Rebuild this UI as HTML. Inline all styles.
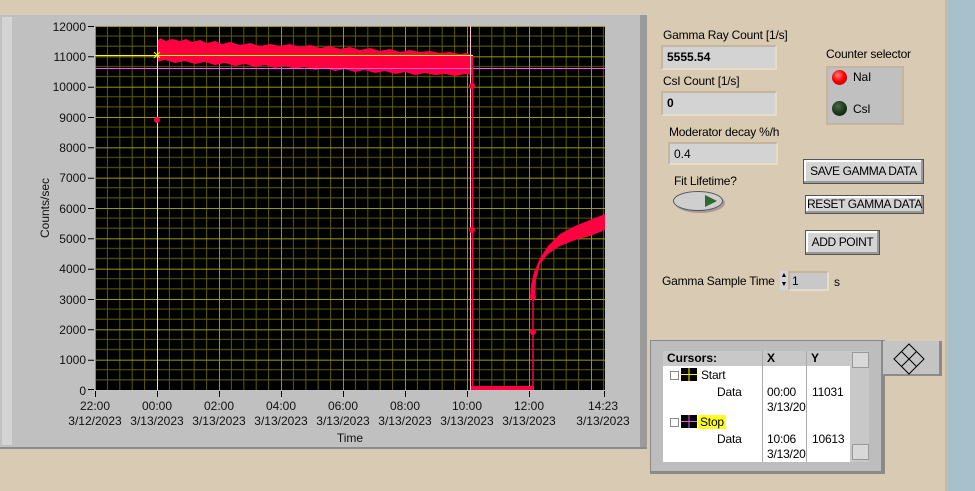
<!DOCTYPE html>
<html><head><style>
body{margin:0;width:975px;height:491px;overflow:hidden;background:#d9cab3;font-family:"Liberation Sans",sans-serif;position:relative}
.a{position:absolute;white-space:nowrap}
.t{font-size:12px;color:#000;letter-spacing:-0.2px}
.box{background:#d3d3d3;border:2px solid #c8b99f;border-color:#c4b59c #e8dcc8 #e8dcc8 #c4b59c;box-sizing:border-box;font-size:12px;padding:3px 4px}
.btn{background:#d4d4d4;border:1px solid #555;box-shadow:inset -2px -2px 0 #999,inset 2px 2px 0 #fff;font-size:12px;text-align:center;box-sizing:border-box;letter-spacing:-0.4px;white-space:nowrap}
</style></head><body>
<div class="a" style="left:948px;top:0;width:27px;height:491px;background:#a8bfcc"></div>
<div class="a" style="left:945px;top:0;width:3px;height:491px;background:#c9bba5"></div>
<div class="a" style="left:0;top:15px;width:647px;height:432px;background:#c0c0c0;border-bottom:2px solid #8a8a8a"></div>
<div class="a" style="left:2px;top:17px;width:10px;height:428px;background:#d4d4d4"></div>
<div class="a" style="left:640px;top:15px;width:7px;height:432px;background:#9a9a9a"></div>
<svg class="a" style="left:0;top:0" width="640" height="491" font-family="Liberation Sans" font-size="12">
<defs>
<pattern id="g" x="95" y="26" width="62" height="30.333" patternUnits="userSpaceOnUse">
<g stroke="#5a5a00" stroke-width="1">
<line x1="12.4" y1="0" x2="12.4" y2="31"/><line x1="24.8" y1="0" x2="24.8" y2="31"/><line x1="37.2" y1="0" x2="37.2" y2="31"/><line x1="49.6" y1="0" x2="49.6" y2="31"/>
<line x1="0" y1="10.1" x2="62" y2="10.1"/><line x1="0" y1="20.2" x2="62" y2="20.2"/>
</g>
<g stroke="#9a9a00"><line x1="0.5" y1="0" x2="0.5" y2="31"/><line x1="0" y1="0.5" x2="62" y2="0.5"/></g>
</pattern>
</defs>
<rect x="95" y="26" width="510" height="364" fill="#000"/>
<rect x="95" y="26" width="510" height="364" fill="url(#g)"/>
<polygon fill="#ff0040" points="157,42 160,38 166,41 172,39 180,41 186,39 192,42 200,40 207,43 215,41 222,44 230,42 240,45 250,43 260,46 270,44 280,46 290,44 300,47 310,45 320,48 330,46 340,49 350,47 360,50 370,48 380,51 390,49 400,52 410,50 420,52 430,51 440,53 450,52 460,54 465,53 473,55 473,75 465,74 455,76 445,74 435,75 425,73 415,75 405,72 395,74 385,71 375,73 365,70 355,72 345,69 335,71 325,68 315,70 305,67 295,69 285,66 275,68 265,65 255,67 245,64 235,66 225,63 215,65 205,62 195,64 185,61 175,63 165,60 157,62"/>
<line x1="95" y1="68.5" x2="605" y2="68.5" stroke="#ff50ff"/>
<line x1="95" y1="55.5" x2="473" y2="55.5" stroke="#ffff00"/>
<line x1="157.5" y1="26" x2="157.5" y2="390" stroke="#ffff00"/>
<line x1="470.5" y1="26" x2="470.5" y2="390" stroke="#ffc0d0"/>
<line x1="472.5" y1="60" x2="472.5" y2="389" stroke="#ff0040" stroke-width="1.5"/>
<rect x="471" y="386" width="63" height="4" fill="#ff0040"/>
<line x1="533" y1="389" x2="533" y2="298" stroke="#ff0040" stroke-width="1.5"/>
<path fill="#ff0040" d="M530,298 L531,285 534,272 540,258 548,246 560,234 575,226 590,220 605,214 L605,230 590,236 575,240 560,246 548,254 540,264 536,280 535,300 Z"/>
<circle cx="157" cy="120" r="3" fill="#ff0040"/>
<circle cx="472" cy="230" r="3" fill="#ff0040"/>
<circle cx="472" cy="86" r="3" fill="#ff0040"/>
<circle cx="533" cy="332" r="3" fill="#ff0040"/>
<circle cx="533" cy="297" r="3" fill="#ff0040"/>
<path d="M154,52 l6,6 m0,-6 l-6,6" stroke="#ffff00"/>
<g text-anchor="end" fill="#111">
<text x="86" y="31">12000</text><text x="86" y="61">11000</text><text x="86" y="91">10000</text><text x="86" y="122">9000</text><text x="86" y="152">8000</text><text x="86" y="182">7000</text><text x="86" y="213">6000</text><text x="86" y="243">5000</text><text x="86" y="273">4000</text><text x="86" y="304">3000</text><text x="86" y="334">2000</text><text x="86" y="364">1000</text><text x="86" y="395">0</text>
</g>
<g stroke="#000">
<path d="M88,26.5h6M88,56.8h6M88,87.2h6M88,117.5h6M88,147.8h6M88,178.2h6M88,208.5h6M88,238.8h6M88,269.2h6M88,299.5h6M88,329.8h6M88,360.2h6M88,389.5h6"/>
<path d="M95.5,391v6M157.5,391v6M219.5,391v6M281.5,391v6M343.5,391v6M405.5,391v6M467.5,391v6M529.5,391v6M604.5,391v6"/>
</g>
<g text-anchor="middle" fill="#111">
<text x="95" y="410">22:00</text><text x="95" y="425">3/12/2023</text>
<text x="157" y="410">00:00</text><text x="157" y="425">3/13/2023</text>
<text x="219" y="410">02:00</text><text x="219" y="425">3/13/2023</text>
<text x="281" y="410">04:00</text><text x="281" y="425">3/13/2023</text>
<text x="343" y="410">06:00</text><text x="343" y="425">3/13/2023</text>
<text x="405" y="410">08:00</text><text x="405" y="425">3/13/2023</text>
<text x="467" y="410">10:00</text><text x="467" y="425">3/13/2023</text>
<text x="529" y="410">12:00</text><text x="529" y="425">3/13/2023</text>
<text x="603" y="410">14:23</text><text x="603" y="425">3/13/2023</text>
<text x="350" y="442">Time</text>
<text transform="translate(49,208) rotate(-90)">Counts/sec</text>
</g>
</svg>
<div class="a t" style="left:663px;top:28px">Gamma Ray Count [1/s]</div>
<div class="a box" style="left:661px;top:45px;width:116px;height:25px;font-weight:bold">5555.54</div>
<div class="a t" style="left:663px;top:74px">CsI Count [1/s]</div>
<div class="a box" style="left:661px;top:91px;width:116px;height:25px;font-weight:bold">0</div>
<div class="a t" style="left:669px;top:125px">Moderator decay %/h</div>
<div class="a box" style="left:668px;top:142px;width:110px;height:23px">0.4</div>
<div class="a t" style="left:674px;top:174px">Fit Lifetime?</div>
<div class="a" style="left:673px;top:191px;width:48px;height:18px;border-radius:50%;background:#cfcfcf;border:1px solid #555;box-shadow:2px 2px 0 #a99"></div>
<div class="a" style="left:705px;top:195px;width:0;height:0;border-left:12px solid #2e6a2e;border-top:6px solid transparent;border-bottom:6px solid transparent"></div>
<div class="a t" style="left:826px;top:47px">Counter selector</div>
<div class="a" style="left:826px;top:66px;width:74px;height:55px;background:#c0c0c0;border:2px solid #c4b59c"></div>
<div class="a" style="left:832px;top:70px;width:15px;height:15px;border-radius:50%;background:radial-gradient(circle at 40% 35%,#ff8080,#f00 45%,#900);"></div>
<div class="a t" style="left:853px;top:70px">NaI</div>
<div class="a" style="left:832px;top:101px;width:15px;height:15px;border-radius:50%;background:radial-gradient(circle at 40% 35%,#4a6a4a,#1c3a1c 50%,#0a1a0a);"></div>
<div class="a t" style="left:853px;top:102px">CsI</div>
<div class="a btn" style="left:803px;top:159px;width:121px;height:25px;line-height:23px">SAVE GAMMA DATA</div>
<div class="a btn" style="left:805px;top:195px;width:119px;height:19px;line-height:17px">RESET GAMMA DATA</div>
<div class="a btn" style="left:805px;top:230px;width:75px;height:25px;line-height:23px">ADD POINT</div>
<div class="a t" style="left:662px;top:274px">Gamma Sample Time</div>
<div class="a" style="left:780px;top:271px;width:8px;height:19px;background:#d4d4d4;font-size:7px;line-height:9px;text-align:center">▲<br>▼</div>
<div class="a box" style="left:788px;top:271px;width:41px;height:20px;background:#c8c8c8;padding:1px 2px">1</div>
<div class="a t" style="left:834px;top:275px">s</div>
<div class="a" style="left:650px;top:340px;width:230px;height:130px;background:#bdbdbd;border:1px solid #888;border-right:4px solid #8a8a8a;border-bottom:3px solid #8a8a8a"></div>
<div class="a" style="left:663px;top:351px;width:206px;height:111px;background:#fff"></div>
<div class="a" style="left:663px;top:351px;width:99px;height:15px;background:#c8c8c8;font-weight:bold;font-size:12px;padding-left:4px;box-sizing:border-box;line-height:15px">Cursors:</div>
<div class="a" style="left:763px;top:351px;width:43px;height:15px;background:#c8c8c8;font-weight:bold;font-size:12px;padding-left:4px;box-sizing:border-box">X</div>
<div class="a" style="left:807px;top:351px;width:43px;height:15px;background:#c8c8c8;font-weight:bold;font-size:12px;padding-left:4px;box-sizing:border-box">Y</div>
<div class="a" style="left:762px;top:351px;width:1px;height:111px;background:#aaa"></div>
<div class="a" style="left:806px;top:351px;width:1px;height:111px;background:#aaa"></div>
<div class="a" style="left:850px;top:351px;width:19px;height:111px;background:#c8c8c8"></div>
<div class="a" style="left:852px;top:352px;width:15px;height:14px;background:#d8d8d8;border:1px solid #999"></div>
<div class="a" style="left:852px;top:444px;width:15px;height:14px;background:#d8d8d8;border:1px solid #999"></div>
<div class="a" style="left:670px;top:371px;width:7px;height:7px;border:1px solid #888;background:#fff"></div>
<div class="a" style="left:670px;top:418px;width:7px;height:7px;border:1px solid #888;background:#fff"></div>
<div class="a" style="left:681px;top:368px;width:16px;height:13px;background:#000"></div>
<div class="a" style="left:681px;top:415px;width:16px;height:13px;background:#000"></div>
<svg class="a" style="left:681px;top:368px" width="16" height="60"><g stroke-width="1"><path d="M8,0v13M0,6.5h16" stroke="#ffff00"/><path d="M8,47v13M0,53.5h16" stroke="#e060e0"/></g></svg>
<div class="a t" style="left:701px;top:368px">Start</div>
<div class="a t" style="left:698px;top:415px;background:#ffff20;padding:0 2px">Stop</div>
<div class="a t" style="left:717px;top:385px">Data</div>
<div class="a t" style="left:717px;top:432px">Data</div>
<div class="a t" style="left:767px;top:385px;line-height:15px;width:39px;overflow:hidden;white-space:nowrap">00:00<br>3/13/2023</div>
<div class="a t" style="left:767px;top:432px;line-height:15px;width:39px;overflow:hidden;white-space:nowrap">10:06<br>3/13/2023</div>
<div class="a t" style="left:812px;top:385px">11031</div>
<div class="a t" style="left:812px;top:432px">10613</div>
<div class="a" style="left:883px;top:341px;width:56px;height:33px;background:#c4c4c4;border-right:3px solid #8a8a8a;border-bottom:2px solid #8a8a8a"></div>
<svg class="a" style="left:893px;top:343px" width="32" height="32"><g fill="none" stroke="#000"><path d="M16,1 L31,16 16,31 1,16Z M8.5,8.5 L23.5,23.5 M23.5,8.5 L8.5,23.5"/></g></svg>
</body></html>
